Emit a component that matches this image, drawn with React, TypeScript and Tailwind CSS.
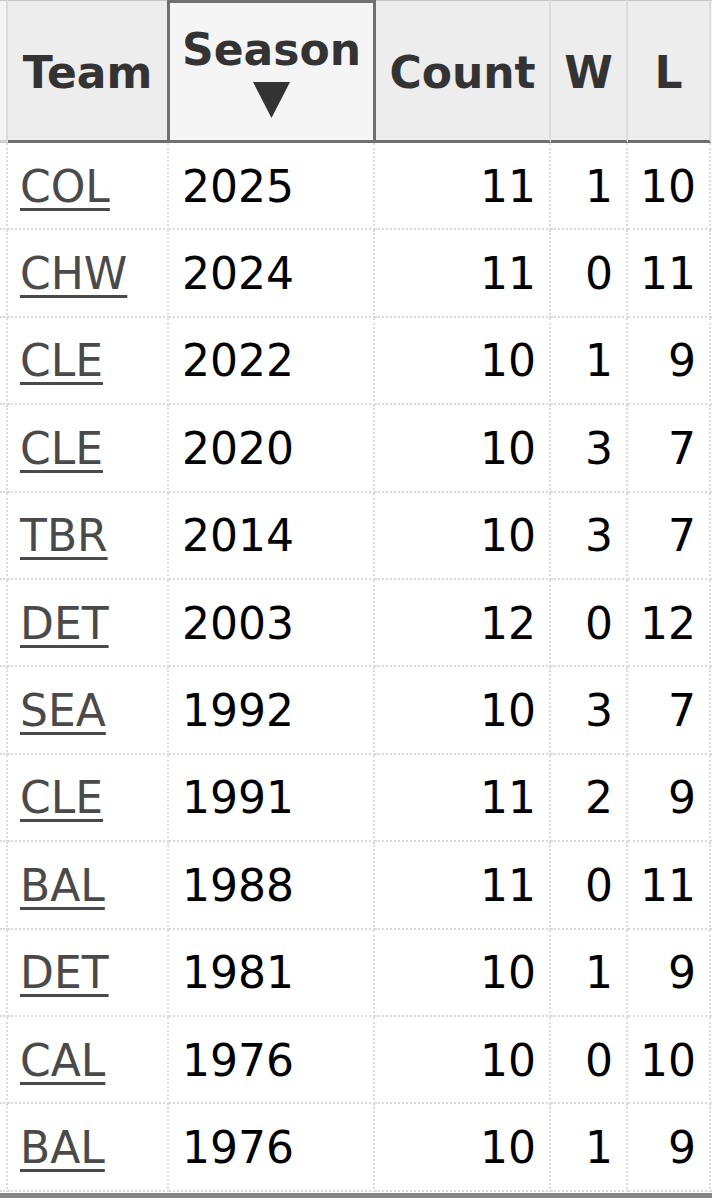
import React from 'react';

type Row = { team: string; season: number; count: number; w: number; l: number };

const rows: Row[] = [
    { team: 'COL', season: 2025, count: 11, w: 1, l: 10 },
    { team: 'CHW', season: 2024, count: 11, w: 0, l: 11 },
    { team: 'CLE', season: 2022, count: 10, w: 1, l: 9 },
    { team: 'CLE', season: 2020, count: 10, w: 3, l: 7 },
    { team: 'TBR', season: 2014, count: 10, w: 3, l: 7 },
    { team: 'DET', season: 2003, count: 12, w: 0, l: 12 },
    { team: 'SEA', season: 1992, count: 10, w: 3, l: 7 },
    { team: 'CLE', season: 1991, count: 11, w: 2, l: 9 },
    { team: 'BAL', season: 1988, count: 11, w: 0, l: 11 },
    { team: 'DET', season: 1981, count: 10, w: 1, l: 9 },
    { team: 'CAL', season: 1976, count: 10, w: 0, l: 10 },
    { team: 'BAL', season: 1976, count: 10, w: 1, l: 9 },
];

function SortArrow() {
    return (
        <svg width="37" height="36" viewBox="0 0 37 36" className="block">
            <polygon points="0,0 37,0 18.5,36" fill="#333333" />
        </svg>
    );
}

export default function App() {
    const font = { fontFamily: '"DejaVu Sans", Verdana, "Liberation Sans", sans-serif' };

    return (
        <div className="w-[712px] h-[1200px] bg-white overflow-hidden" style={font}>
            {/* header */}
            <div className="flex h-[143px] text-[44px] font-bold text-[#333333] leading-[50px]">
                <div className="w-[8px] shrink-0 bg-[#f4f4f4] border-r-2 border-[#dcdcdc] border-t border-t-[#c8c8c8] border-b-[3px] border-b-[#d0d0d0]" />
                <div className="w-[159px] shrink-0 bg-[#ededed] border-t border-t-[#c8c8c8] border-b-[3px] border-b-[#6e6e6e] flex items-center justify-center pt-[4px]">
                    Team
                </div>
                <div className="w-[209px] shrink-0 bg-[#f5f5f5] border-[3px] border-[#707070] flex flex-col items-center justify-start pt-[22px]">
                    <span>Season</span>
                    <span className="mt-[7px]"><SortArrow /></span>
                </div>
                <div className="w-[175px] shrink-0 bg-[#ededed] border-r-2 border-r-[#dcdcdc] border-t border-t-[#c8c8c8] border-b-[3px] border-b-[#6e6e6e] flex items-center justify-center pt-[4px]">
                    Count
                </div>
                <div className="w-[77px] shrink-0 bg-[#ededed] border-r-2 border-r-[#dcdcdc] border-t border-t-[#c8c8c8] border-b-[3px] border-b-[#6e6e6e] flex items-center justify-center pt-[4px]">
                    W
                </div>
                <div className="w-[83px] shrink-0 bg-[#ededed] border-r-2 border-r-[#dcdcdc] border-t border-t-[#c8c8c8] border-b-[3px] border-b-[#6e6e6e] flex items-center justify-center pt-[4px]">
                    L
                </div>
                <div className="w-[1px] shrink-0 bg-[#f4f4f4] border-t border-t-[#c8c8c8]" />
            </div>

            {/* body */}
            {rows.map((r, i) => (
                <div key={i} className="flex h-[87.4px] text-[44px] text-black leading-none">
                    <div className="w-[8px] shrink-0 border-r-2 border-r-[#dcdcdc] border-b-2 border-dotted border-b-[#dadada]" />
                    <div className="w-[161px] shrink-0 border-r-2 border-r-[#dcdcdc] border-b-2 border-dotted border-b-[#dadada] flex items-center pl-[12px] pt-[2px]">
                        <a href="#" className="text-[#4a4a4a] underline decoration-[3px] underline-offset-[6px]">{r.team}</a>
                    </div>
                    <div className="w-[206px] shrink-0 border-r-2 border-r-[#dcdcdc] border-b-2 border-dotted border-b-[#dadada] flex items-center pl-[13px] pt-[2px]">
                        {r.season}
                    </div>
                    <div className="w-[176px] shrink-0 border-r-2 border-r-[#dcdcdc] border-b-2 border-dotted border-b-[#dadada] flex items-center justify-end pr-[13px] pt-[2px]">
                        {r.count}
                    </div>
                    <div className="w-[77px] shrink-0 border-r-2 border-r-[#dcdcdc] border-b-2 border-dotted border-b-[#dadada] flex items-center justify-end pr-[13px] pt-[2px]">
                        {r.w}
                    </div>
                    <div className="w-[83px] shrink-0 border-r-2 border-r-[#dcdcdc] border-b-2 border-dotted border-b-[#dadada] flex items-center justify-end pr-[13px] pt-[2px]">
                        {r.l}
                    </div>
                    <div className="w-[1px] shrink-0 border-b-2 border-dotted border-b-[#dadada]" />
                </div>
            ))}
            <div className="h-[1px]" />
            <div className="h-[5px] bg-[#858585]" />
        </div>
    );
}
